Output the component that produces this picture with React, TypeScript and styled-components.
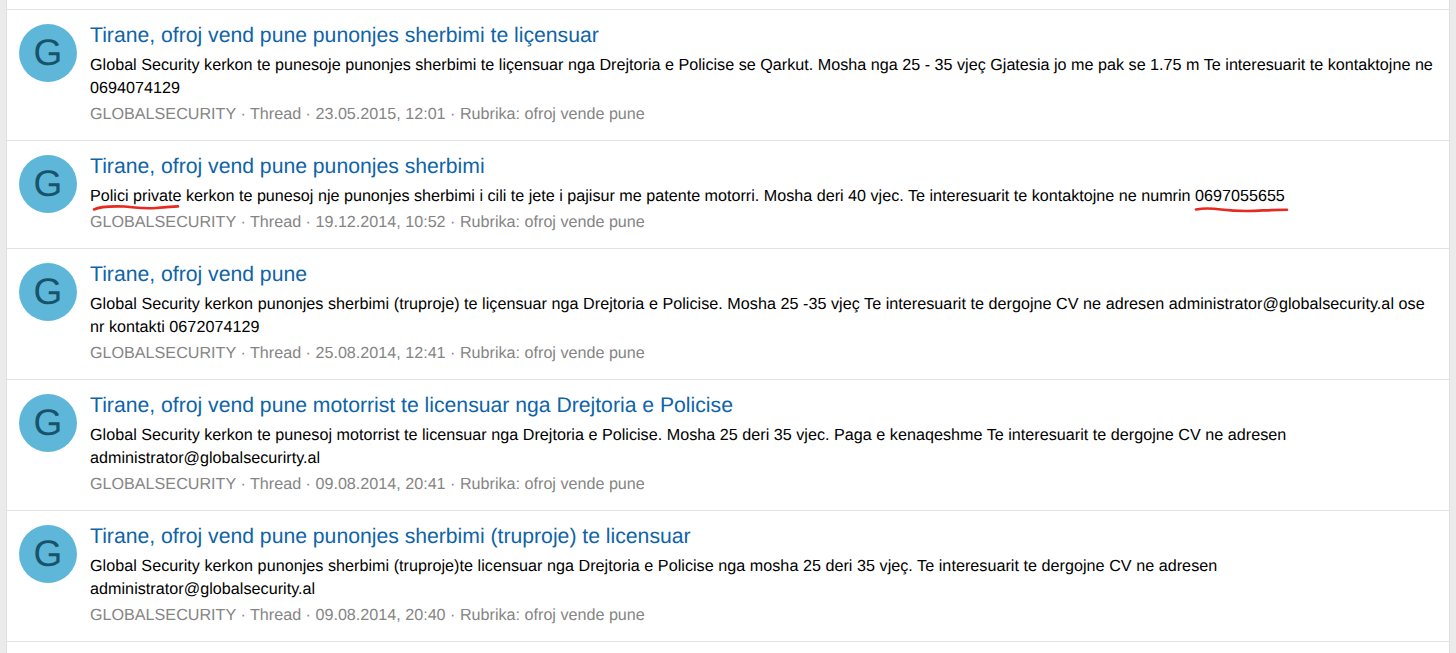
import React from "react";
import styled, { createGlobalStyle } from "styled-components";

const Global = createGlobalStyle`
  html, body { margin: 0; padding: 0; background: #ebebeb; }
  body { font-family: "Liberation Sans", Arial, sans-serif; overflow: hidden; text-rendering: geometricPrecision; }
`;

const Page = styled.div`
  width: 1456px;
  height: 653px;
  overflow: hidden;
  box-sizing: border-box;
  padding: 0 6px;
  background: #ebebeb;
`;

const Panel = styled.div`
  height: 100%;
  background: #fff;
  border-left: 1px solid #e0e0e0;
  border-right: 1px solid #e0e0e0;
  box-sizing: border-box;
`;

const Stub = styled.div`
  height: 9px;
  background: #fff;
`;

const Row = styled.div`
  display: flex;
  gap: 13px;
  padding: 13px 12px 0;
  border-top: 1px solid #e3e3e3;
  box-sizing: border-box;
  height: ${(p) => (p.$short ? 108 : 131)}px;
`;

const Avatar = styled.div`
  flex: none;
  width: 58px;
  height: 58px;
  margin-top: 1px;
  border-radius: 50%;
  background: #5eb7d9;
  color: #17536b;
  font-size: 37px;
  line-height: 58px;
  text-align: center;
`;

const Content = styled.div`
  flex: 1;
  min-width: 0;
`;

const Title = styled.div`
  color: #0f64a8;
  font-size: 21.18px;
  line-height: 25px;
  margin-bottom: 6px;
`;

const Body = styled.div`
  color: #000;
  font-size: 16.15px;
  line-height: 23px;
  letter-spacing: ${(p) => p.$track || 0}px;
`;

const Meta = styled.div`
  color: #858585;
  font-size: 16.15px;
  line-height: 23px;
  margin-top: 3px;
`;

const Inked = styled.span`
  position: relative;
  display: inline-block;
`;

const Stroke = styled.svg`
  position: absolute;
  left: 0;
  top: ${(p) => p.$top}px;
  overflow: visible;
`;

const items = [
  {
    title: "Tirane, ofroj vend pune punonjes sherbimi te liçensuar",
    body: "Global Security kerkon te punesoje punonjes sherbimi te liçensuar nga Drejtoria e Policise se Qarkut. Mosha nga 25 - 35 vjeç Gjatesia jo me pak se 1.75 m Te interesuarit te kontaktojne ne 0694074129",
    date: "23.05.2015, 12:01",
    track: 0.01,
  },
  {
    title: "Tirane, ofroj vend pune punonjes sherbimi",
    body: (
      <>
        <Inked>
          Polici private
          <Stroke width="90" height="8" $top={18}>
            <path d="M4 6.5 C 10 3.5, 20 3, 34 3.5 C 46 4.5, 54 6, 66 5 C 74 4.2, 82 3.4, 88 3.4" fill="none" stroke="#e8291f" strokeWidth="2.6" strokeLinecap="round" />
          </Stroke>
        </Inked>{" "}
        kerkon te punesoj nje punonjes sherbimi i cili te jete i pajisur me patente motorri. Mosha deri 40 vjec. Te interesuarit te kontaktojne ne numrin{" "}
        <Inked>
          0697055655
          <Stroke width="94" height="8" $top={22}>
            <path d="M1 2.5 C 8 1.2, 16 1.2, 26 2.5 C 40 4.2, 54 4.4, 68 3.4 C 78 3, 86 2.8, 92 2.8" fill="none" stroke="#e8291f" strokeWidth="2.6" strokeLinecap="round" />
          </Stroke>
        </Inked>
      </>
    ),
    date: "19.12.2014, 10:52",
    short: true,
  },
  {
    title: "Tirane, ofroj vend pune",
    body: "Global Security kerkon punonjes sherbimi (truproje) te liçensuar nga Drejtoria e Policise. Mosha 25 -35 vjeç Te interesuarit te dergojne CV ne adresen administrator@globalsecurity.al ose nr kontakti 0672074129",
    date: "25.08.2014, 12:41",
    track: 0.034,
  },
  {
    title: "Tirane, ofroj vend pune motorrist te licensuar nga Drejtoria e Policise",
    body: "Global Security kerkon te punesoj motorrist te licensuar nga Drejtoria e Policise. Mosha 25 deri 35 vjec. Paga e kenaqeshme Te interesuarit te dergojne CV ne adresen administrator@globalsecurirty.al",
    date: "09.08.2014, 20:41",
    track: 0.02,
  },
  {
    title: "Tirane, ofroj vend pune punonjes sherbimi (truproje) te licensuar",
    body: "Global Security kerkon punonjes sherbimi (truproje)te licensuar nga Drejtoria e Policise nga mosha 25 deri 35 vjeç. Te interesuarit te dergojne CV ne adresen administrator@globalsecurity.al",
    date: "09.08.2014, 20:40",
    track: 0.033,
  },
];

export default function App() {
  return (
    <Page>
      <Global />
      <Panel>
        <Stub />
        {items.map((it) => (
          <Row key={it.date} $short={it.short}>
            <Avatar>G</Avatar>
            <Content>
              <Title>{it.title}</Title>
              <Body $track={it.track}>{it.body}</Body>
              <Meta>GLOBALSECURITY · Thread · {it.date} · Rubrika: ofroj vende pune</Meta>
            </Content>
          </Row>
        ))}
        <Row />
      </Panel>
    </Page>
  );
}
